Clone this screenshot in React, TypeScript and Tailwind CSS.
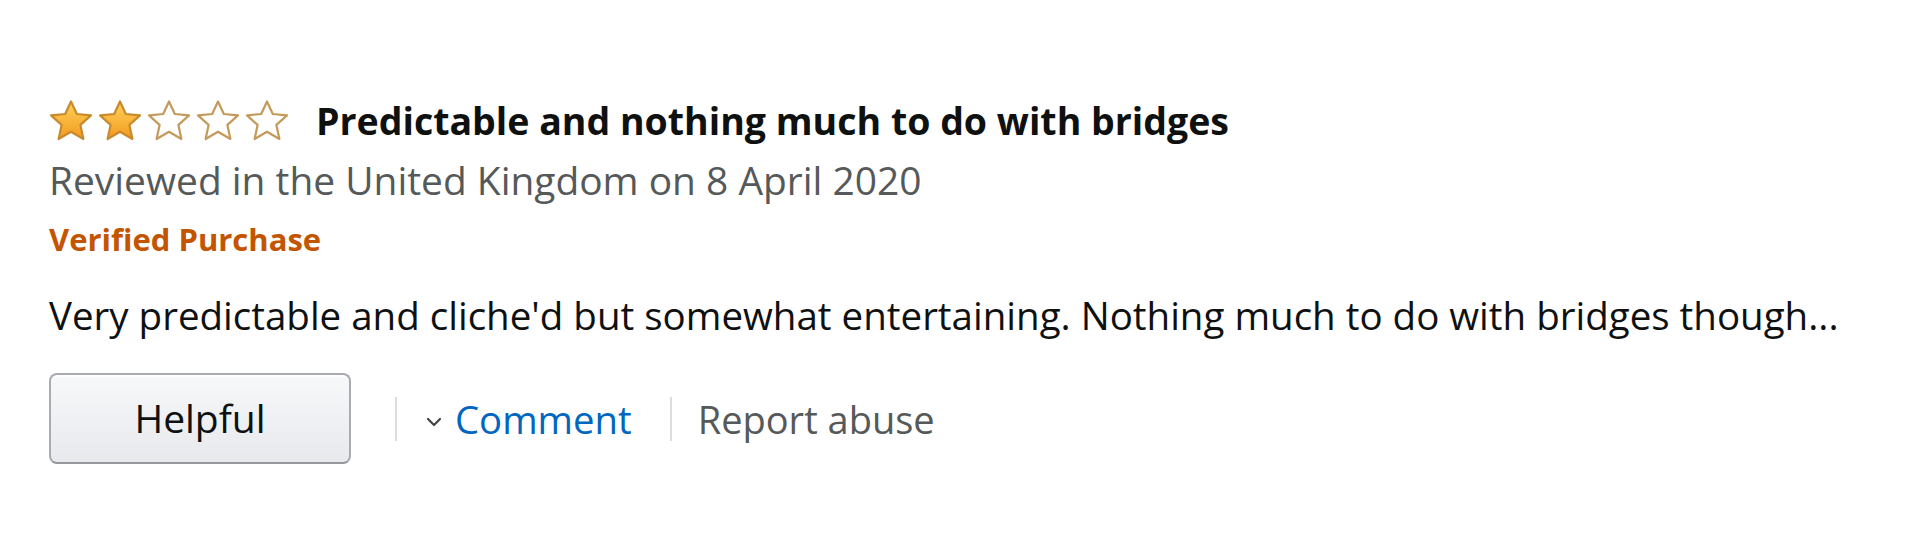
import React from "react";

function Star({ filled }: { filled: boolean }) {
  const id = filled ? "gf" : "ge";
  return (
    <svg width="44" height="42" viewBox="0 0 44 42" className="shrink-0">
      <defs>
        <linearGradient id={id} x1="0" y1="0" x2="0" y2="1">
          {filled ? (
            <>
              <stop offset="0" stopColor="#FFD25A" />
              <stop offset="1" stopColor="#F29A1F" />
            </>
          ) : (
            <>
              <stop offset="0" stopColor="#FFFFFF" />
              <stop offset="1" stopColor="#FFFFFF" />
            </>
          )}
        </linearGradient>
      </defs>
      <path
        d="M22 1.5 L27.8 14 L42 15.4 L31.4 24.9 L34.4 39 L22 31.8 L9.6 39 L12.6 24.9 L2 15.4 L16.2 14 Z"
        fill={`url(#${id})`}
        stroke={filled ? "#C98A2E" : "#C49A5A"}
        strokeWidth="2.2"
        strokeLinejoin="round"
      />
    </svg>
  );
}

export default function App() {
  return (
    <div
      className="w-[1920px] h-[560px] bg-white overflow-hidden pl-[49px]"
      style={{ fontFamily: '"Open Sans", "Noto Sans", sans-serif' }}
    >
      <div className="pt-[97px] h-[145px] flex items-center">
        <div className="flex items-center gap-[5px] h-[48px]">
          <Star filled />
          <Star filled />
          <Star filled={false} />
          <Star filled={false} />
          <Star filled={false} />
        </div>
        <div className="ml-[27px] text-[37.5px] leading-[48px] font-bold text-[#0f1111]">
          Predictable and nothing much to do with bridges
        </div>
      </div>
      <div className="mt-[11px] text-[38.9px] leading-[48px] text-[#565959]">
        Reviewed in the United Kingdom on 8 April 2020
      </div>
      <div className="mt-[15px] text-[31px] leading-[40px] font-bold text-[#c45500]">
        Verified Purchase
      </div>
      <div className="mt-[32px] text-[38.5px] leading-[48px] text-[#0f1111]">
        Very predictable and cliche'd but somewhat entertaining. Nothing much to do with bridges though...
      </div>
      <div className="mt-[34px] flex items-center">
        <button className="w-[302px] h-[91px] rounded-[8px] border-2 border-[#a8abb1] border-b-[#94979d] bg-gradient-to-b from-[#f7f8fa] to-[#e7e9ec] text-[39px] text-[#0f1111] shadow-[inset_0_2px_0_rgba(255,255,255,0.7)] flex items-center justify-center">
          Helpful
        </button>
        <div className="ml-[44px] w-[2px] h-[44px] bg-[#dddddd]" />
        <svg width="18" height="12" viewBox="0 0 18 12" className="ml-[28px] mt-[6px] shrink-0">
          <path d="M3 3 L9 9 L15 3" fill="none" stroke="#444" strokeWidth="2.2" strokeLinecap="round" strokeLinejoin="round" />
        </svg>
        <span className="ml-[12px] text-[38.3px] leading-[48px] text-[#0066c0]">Comment</span>
        <div className="ml-[38px] w-[2px] h-[44px] bg-[#dddddd]" />
        <span className="ml-[26px] text-[38px] leading-[48px] text-[#565959]">Report abuse</span>
      </div>
    </div>
  );
}
